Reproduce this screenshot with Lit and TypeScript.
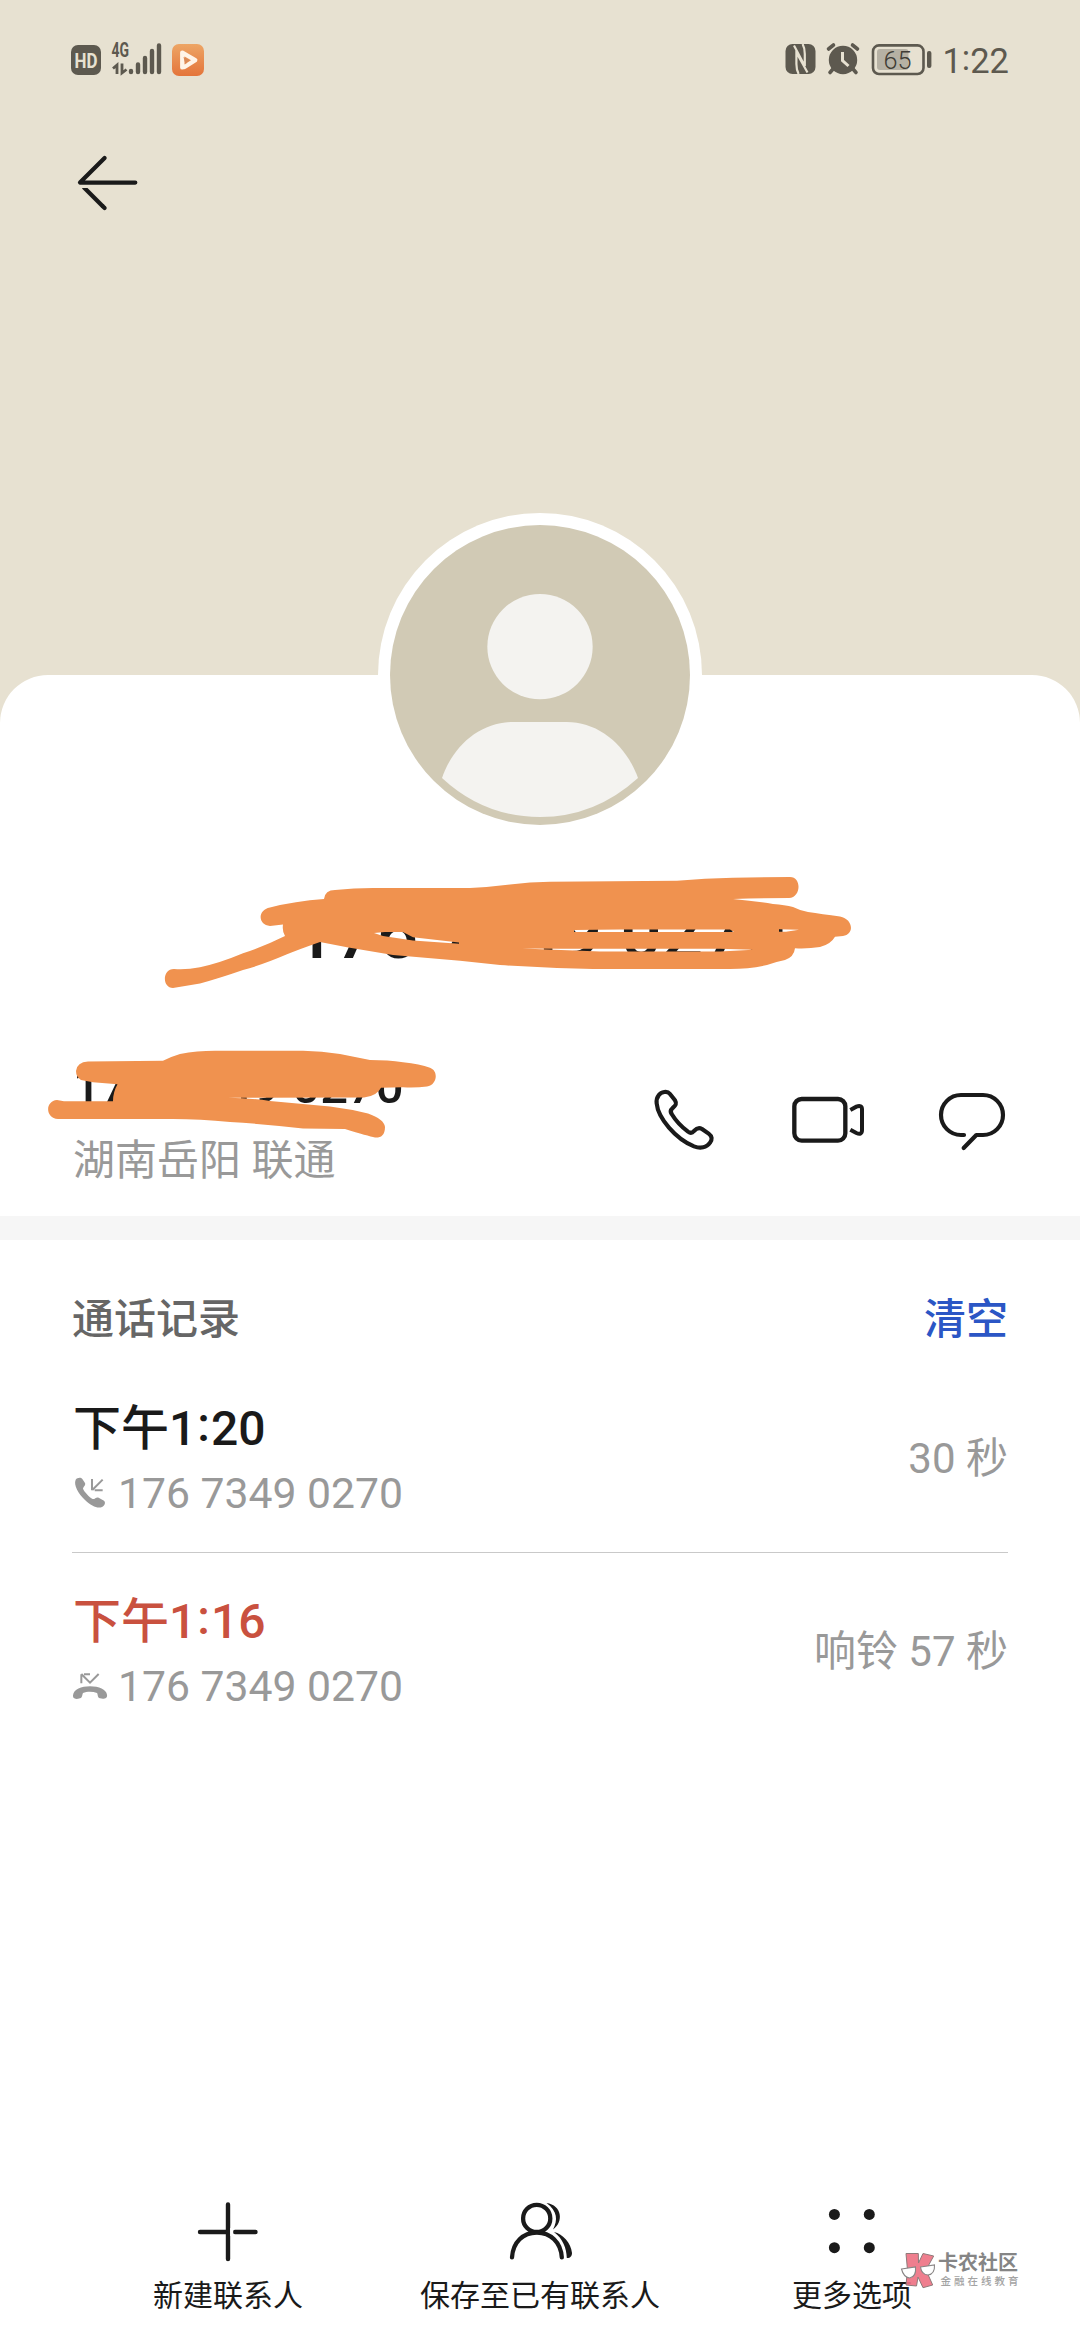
import { LitElement, html, css, svg } from "lit";
import { customElement, property } from "lit/decorators.js";

const INK = "#1a1a1a";
const STATUS = "#5d594f";

interface CallRecord {
  hour: string;
  minute: string;
  number: string;
  duration: string;
  missed: boolean;
}

const calls: CallRecord[] = [
  { hour: "下午1", minute: "20", number: "176 7349 0270", duration: "30 秒", missed: false },
  { hour: "下午1", minute: "16", number: "176 7349 0270", duration: "响铃 57 秒", missed: true },
];

@customElement("status-bar")
class StatusBar extends LitElement {
  static styles = css`
    :host {
      display: flex;
      justify-content: space-between;
      height: 120px;
      padding: 0 71px 0 70px;
      box-sizing: border-box;
    }
    .icons {
      display: block;
      height: 120px;
    }
    .right {
      display: flex;
    }
    .time {
      width: 72px;
      text-align: right;
      font-size: 34.5px;
      line-height: 122px;
      color: #5d594f;
      white-space: nowrap;
    }
    .colon {
      position: relative;
      top: -3px;
    }
    .label {
      font-family: Roboto, "Liberation Sans", sans-serif;
      font-weight: 700;
    }
    .level {
      font-family: Roboto, "Liberation Sans", sans-serif;
      font-weight: 300;
    }
  `;
  render() {
    return html`
      <svg class="icons" width="140" viewBox="70 0 140 120">
        <defs>
          <linearGradient id="play" x1="0" y1="0" x2="0" y2="1">
            <stop offset="0" stop-color="#eda565" />
            <stop offset="1" stop-color="#e4743a" />
          </linearGradient>
        </defs>
        <rect x="71" y="45" width="30" height="30" rx="7" fill=${STATUS} />
        <text class="label" x="74.6" y="68" font-size="20.5" textLength="23" lengthAdjust="spacingAndGlyphs" fill="#e7e1d1">HD</text>
        <text class="label" x="111.6" y="57" font-size="19.5" textLength="17.5" lengthAdjust="spacingAndGlyphs" fill=${STATUS}>4G</text>
        <path d="M113 68.5 L117 65 V74 M122 63.5 V73 L126.5 69.5" fill="none" stroke=${STATUS} stroke-width="2.8" />
        <g stroke=${STATUS} stroke-width="4.4" stroke-linecap="round">
          <path d="M131 71 V72 M138 64.5 V72 M145 58 V72 M152 51 V72 M159 45.5 V72" />
        </g>
        <rect x="172" y="44" width="32" height="32" rx="7" fill="url(#play)" />
        <path d="M182.3 67.4 V52.6 L195.2 60.2 L184.5 67" fill="none" stroke="#fff4e8" stroke-width="4.4" stroke-linejoin="round" stroke-linecap="round" />
        <path d="M183.5 57 L189.5 60.3 L186.500 62 L186 64.500 L184.500 61 Z" fill="#d98a58" />
      </svg>
      <div class="right">
        <svg class="icons" width="152" viewBox="785 0 152 120">
          <rect x="785.5" y="44" width="30" height="30" rx="7" fill=${STATUS} />
          <path d="M794 45.5 L804.8 66 V54 Q804.8 48 802.600 44 M807.500 72.500 L796.400 52.500 V64 Q796.400 70 798.600 74" fill="none" stroke="#e7e1d1" stroke-width="2.2" />
          <circle cx="843" cy="60" r="14.2" fill=${STATUS} />
          <path d="M828.5 49 L833.5 45 M852.5 45 L857.5 49 M833 69 L830 72.5 M853 69 L856 72.5" stroke=${STATUS} stroke-width="3.6" stroke-linecap="round" />
          <path d="M842.5 52 V60.5 L848.5 66" fill="none" stroke="#e7e1d1" stroke-width="3" />
          <rect x="877" y="49" width="31.5" height="21" rx="3" fill="#b6b1a4" />
          <rect x="873" y="45.4" width="50.5" height="28.6" rx="6" fill="none" stroke=${STATUS} stroke-width="2.6" />
          <rect x="927" y="51" width="4.4" height="17" rx="2" fill=${STATUS} />
          <text class="level" x="883.4" y="69" font-size="26.5" textLength="28" lengthAdjust="spacingAndGlyphs" fill="#403c35">65</text>
        </svg>
        <span class="time">1<span class="colon">:</span>22</span>
      </div>
    `;
  }
}

@customElement("contact-avatar")
class ContactAvatar extends LitElement {
  static styles = css`
    :host {
      display: block;
      width: 324px;
      height: 324px;
    }
    svg {
      display: block;
    }
  `;
  render() {
    return html`
      <svg width="324" height="324" viewBox="54 69 972 972">
        <circle cx="540" cy="555" r="486" fill="#fff" />
        <circle cx="540" cy="555" r="450" fill="#d1cab5" />
        <circle cx="540" cy="470" r="158" fill="#f4f3f0" />
        <path d="M246 864 C280 765 362 696 460 696 H620 C716 696 798 765 834 864 Q705 981 540 981 Q372 981 246 864 Z" fill="#f4f3f0" />
      </svg>
    `;
  }
}

@customElement("call-row")
class CallRow extends LitElement {
  @property({ attribute: false }) call!: CallRecord;
  static styles = css`
    :host {
      display: flex;
      justify-content: space-between;
      align-items: center;
      height: 192px;
      box-sizing: border-box;
    }
    .when {
      font-size: 48px;
      font-weight: 500;
      line-height: 64px;
      color: #1a1a1a;
      padding: 6px 0 0 1px;
    }
    .missed {
      color: #c9513f;
    }
    .colon {
      position: relative;
      top: -4px;
      padding: 0 1px;
    }
    .detail {
      display: flex;
      align-items: center;
      margin-top: 3px;
      gap: 10px;
      font-size: 42.7px;
      line-height: 58px;
      color: #999;
      font-weight: 400;
      white-space: nowrap;
    }
    .icon {
      display: block;
    }
    .duration {
      font-size: 42px;
      line-height: 58px;
      color: #999;
      padding-top: 6px;
    }
  `;
  private answeredIcon() {
    return html`<svg class="icon" width="36" height="36" viewBox="96 610 108 108">
      <path fill="#999" d="M107 624 C112 617 123 616 127 622 L135 634 C138 641 130 645 129 651 C134 662 148 676 158 682 C164 684 168 675 176 678 L192 687 C198 693 194 701 186 706 C173 712 154 703 135 685 C115 666 100 640 107 624 Z" />
      <path fill="none" stroke="#999" stroke-width="6" d="M188 624 L157 655 M156 622 V656 M164 656 H188" />
    </svg>`;
  }
  private missedIcon() {
    return html`<svg class="icon" width="36" height="36" viewBox="96 1192 108 108">
      <path fill="#999" d="M99 1274 C101 1256 124 1247 150 1247 C177 1247 199 1257 201 1272 C203 1284 191 1286 180 1283 C172 1281 174 1271 171 1267 C158 1262 141 1262 129 1267 C126 1272 128 1281 120 1283 C108 1286 98 1286 99 1274 Z" />
      <path fill="none" stroke="#999" stroke-width="6" d="M176 1210 L150 1236 L124 1210 M124 1238 V1211 M132 1211 H150" />
    </svg>`;
  }
  render() {
    const c = this.call;
    return html`
      <div>
        <div class="when ${c.missed ? "missed" : ""}">${c.hour}<span class="colon">:</span>${c.minute}</div>
        <div class="detail">${c.missed ? this.missedIcon() : this.answeredIcon()}<span>${c.number}</span></div>
      </div>
      <div class="duration">${c.duration}</div>
    `;
  }
}

@customElement("app-root")
class AppRoot extends LitElement {
  static styles = css`
    :host {
      display: block;
      width: 1080px;
      height: 2340px;
      position: relative;
      overflow: hidden;
      background: #fff;
      font-family: Roboto, "Noto Sans CJK SC", sans-serif;
      color: #1a1a1a;
    }
    .page {
      display: flex;
      flex-direction: column;
      height: 2340px;
    }
    .cover {
      height: 723px;
      background: #e7e1d1;
      flex: none;
    }
    .back {
      display: block;
      margin: 27px 0 0 72px;
    }
    .sheet {
      flex: 1;
      display: flex;
      flex-direction: column;
      margin-top: -48px;
      border-radius: 48px 48px 0 0;
      background: #fff;
    }
    .avatar {
      margin: -162px auto 0;
      flex: none;
    }
    .name {
      margin-top: 54px;
      height: 84px;
      line-height: 84px;
      text-align: center;
      font-size: 73px;
      font-weight: 500;
      white-space: nowrap;
    }
    .contact {
      display: flex;
      justify-content: space-between;
      align-items: center;
      height: 208px;
      margin-top: 33px;
      padding: 0 72px;
    }
    .identity {
      margin-top: 22px;
    }
    .number {
      font-size: 49px;
      font-weight: 500;
      line-height: 66px;
      white-space: nowrap;
      padding-left: 1px;
    }
    .place {
      font-size: 42px;
      line-height: 62px;
      color: #999;
      margin-top: 10px;
      padding-left: 1px;
    }
    .actions {
      display: flex;
      gap: 72px;
      margin-top: 16px;
    }
    .band {
      height: 24px;
      background: #f6f6f6;
      flex: none;
    }
    .log {
      flex: 1;
      padding: 0 72px;
    }
    .log-head {
      display: flex;
      justify-content: space-between;
      height: 120px;
      padding-top: 20px;
      box-sizing: border-box;
      font-size: 42px;
      line-height: 120px;
      font-weight: 500;
    }
    .log-title {
      color: #666;
    }
    .clear {
      color: #2b56c5;
    }
    .rule {
      height: 1px;
      background: #c9c9c9;
    }
    .toolbar {
      display: grid;
      grid-template-columns: repeat(3, 312px);
      justify-content: center;
      height: 144px;
      flex: none;
    }
    .tool {
      display: flex;
      flex-direction: column;
      align-items: center;
      font-size: 30px;
      line-height: 44px;
      font-weight: 400;
      white-space: nowrap;
      gap: 6px;
    }
    .scribble {
      position: absolute;
      left: 0;
      top: 0;
    }
    .watermark {
      position: absolute;
      left: 897px;
      top: 2246px;
    }
    .brand {
      font-family: "Noto Sans CJK SC", sans-serif;
      font-weight: 700;
    }
    .tagline {
      font-family: "Noto Sans CJK SC", sans-serif;
      font-weight: 500;
    }
  `;

  private scribble() {
    return svg`
      <path fill="#f0924f" fill-rule="evenodd" d="
        M324 899 Q325 890 335 890 Q354 888 373 888 L470 888 Q490 887 510 884.5 Q530 882 550 881.7 L677 880.7 Q705 878 733 877.7 L790 877
        C802 877 801 898 789 898 Q760 898 733 899 Q755 901 773 904 Q785 905 793 907 Q801 911 808 912 Q822 914 840 916.5
        C853 919 855 934 843 936 L835 936.7 Q831 944 820 947 Q808 949 795 948.3 Q794 957 785 960 Q775 962 767 965 Q750 969 730 969 L593 969
        Q546 968 500 965 L460 960.7 L393 955 L347 947.3 L320 942 Q300 949 287 954.3 Q262 965 243 970 Q220 978 200 983.5 Q185 986 173 988
        C162 988 162 969 174 969 Q186 970 200 967.3 Q220 963 243 953.3 Q265 946 285 936 Q282 931 283 924.5 L270 926 C258 925 257 910 270 907.5 Q295 901 324 899 Z
        M374 933 L385 932 H403 L413 937.3 L459 942.6 V943.8 L413 940.5 L383 936 Z
        M574 930 L620 929.6 L730 929.6 L734 932 H574 Z
        M779 929.3 L799 929.8 L786 931.8 H779 Z
        M522 948.4 L560 948.8 H720 L753 949.8 L720 951.5 H600 Z" />
      <path fill="#f0924f" d="
        M76 1071 Q77 1062 88 1061.5 L163 1060.7 Q170 1057 180 1054 Q198 1050.5 217 1050.7 H303 Q322 1051 340 1054 L370 1060 Q388 1060 403 1062.3 Q420 1064 430 1067.7
        C439 1071 437 1085 427 1086.5 Q416 1088 403 1087.3 L381 1087.7 Q377 1096 364 1097.5 L228 1097.7 Q250 1098 270 1101 L330 1106.5 Q350 1109 368 1113.5 Q384 1119 385 1127
        C385 1136 380 1138 375 1137.5 Q368 1136 345 1129 L303 1128.5 Q265 1124 230 1122 Q200 1119 173 1119 L58 1119 C45 1118 45 1101 57 1100 L64 1101.2 H113 Q113 1092 117.5 1084.3 L93 1082.3 L81 1080 Q76 1077 76 1071 Z" />
    `;
  }

  render() {
    return html`
      <div class="page">
        <div class="cover">
          <status-bar></status-bar>
          <svg class="back" width="72" height="72" viewBox="72 147 72 72">
            <g fill="none" stroke=${INK} stroke-width="4.2" stroke-linecap="round" stroke-linejoin="round">
              <path d="M104.6 158 L80 182.6 H135.3" />
              <path stroke-linecap="butt" d="M83.500 187 L103 206.400" />
              <path d="M103 206.400 L104.600 208" />
            </g>
            <rect x="80" y="185" width="14" height="3" fill="#e7e1d1" />
          </svg>
        </div>
        <div class="sheet">
          <contact-avatar class="avatar"></contact-avatar>
          <div class="name">176 7349 0270</div>
          <div class="contact">
            <div class="identity">
              <div class="number">176 7349 0270</div>
              <div class="place">湖南岳阳 联通</div>
            </div>
            <div class="actions">
              <svg width="72" height="72" viewBox="84 72 216 216">
                <path fill="none" stroke=${INK} stroke-width="12.5" stroke-linejoin="round" d="M116 106 C124 95 142 92 150 102 L165 121 C171 131 168 136 158 144 C151 150 151 156 155 162 C166 180 188 203 204 215 C211 220 217 219 222 213 C230 204 237 202 246 207 L266 221 C277 229 277 239 270 248 C260 263 241 266 222 259 C167 237 114 174 110 130 C109 120 111 112 116 106 Z" />
              </svg>
              <svg width="72" height="72" viewBox="516 72 216 216">
                <rect x="523" y="117" width="153" height="125" rx="22" fill="none" stroke=${INK} stroke-width="13" />
                <path fill="none" stroke=${INK} stroke-width="12" d="M691 150 L709 140 Q726 134 726 148 V210 Q726 226 709 219 L691 209" />
              </svg>
              <svg width="72" height="72" viewBox="948 72 216 216">
                <path fill="none" stroke=${INK} stroke-width="12.5" stroke-linecap="round" stroke-linejoin="round" d="M1032 225 H1023 A60 60 0 0 1 1023 105 H1089 A60 60 0 0 1 1089 225 H1069 L1031 264" />
              </svg>
            </div>
          </div>
          <div class="band"></div>
          <div class="log">
            <div class="log-head"><span class="log-title">通话记录</span><span class="clear">清空</span></div>
            <call-row .call=${calls[0]}></call-row>
            <div class="rule"></div>
            <call-row .call=${calls[1]}></call-row>
          </div>
          <div class="toolbar">
            <div class="tool">
              <svg width="72" height="72" viewBox="192 2196 72 72">
                <path fill="none" stroke=${INK} stroke-width="4.4" stroke-linecap="round" d="M228 2204.5 V2259 M200 2232 H226 M235 2232 H255.5" />
                <rect x="230.2" y="2228" width="3" height="8" fill="#fff" />
              </svg>
              <span>新建联系人</span>
            </div>
            <div class="tool">
              <svg width="72" height="72" viewBox="504 2196 72 72">
                <g fill="none" stroke=${INK} stroke-width="4.3" stroke-linecap="round">
                  <circle cx="536.7" cy="2218.4" r="13.6" />
                  <path d="M512 2257.4 C513 2242 523 2232.6 536.8 2232.6 C550.5 2232.6 560.8 2242 561.8 2257.4" />
                </g>
                <path fill=${INK} d="M546.5 2203 C562 2205 564 2222 553 2229.5 C558 2220 557.5 2211 546.5 2203 Z M554 2232 C563 2234 571 2243 572 2253 C572 2257 569 2258.5 566.8 2258 C566.5 2248 563 2239 554 2232 Z" />
              </svg>
              <span>保存至已有联系人</span>
            </div>
            <div class="tool">
              <svg width="72" height="72" viewBox="816 2196 72 72">
                <g fill=${INK}>
                  <circle cx="834.4" cy="2214.4" r="5.5" /><circle cx="869.3" cy="2214.4" r="5.5" />
                  <circle cx="834.4" cy="2247.7" r="5.5" /><circle cx="869.3" cy="2247.7" r="5.5" />
                </g>
              </svg>
              <span>更多选项</span>
            </div>
          </div>
        </div>
      </div>
      <svg class="scribble" width="1080" height="1160" viewBox="0 0 1080 1160">${this.scribble()}</svg>
      <svg class="watermark" width="128" height="48" viewBox="896 2246 128 48">
        <path fill="#ee7384" fill-opacity="0.92" stroke="#8f7a7a" stroke-width="1" d="M905 2253.5 L917.3 2253.5 L917.5 2263 L922 2253.5 L932.7 2256 L925 2270 L931.7 2285 L922 2287.7 L917 2277 L915.5 2286 L905 2285 L906.5 2270 Z" />
        <path fill="#fff" stroke="#8a8686" stroke-width="1.1" d="M900.5 2269 L914.5 2267 Q915.5 2277 908.5 2278 Q902.5 2277 900.5 2269 Z M919.5 2267 L933.5 2265 Q934 2274 927 2275 Q920.5 2274.500 919.5 2267 Z" />
        <text class="brand" x="937" y="2270" font-size="20" textLength="80" fill="#858585">卡农社区</text>
        <text class="tagline" x="939.5" y="2284.5" font-size="10.5" textLength="78" fill="#a3a3a3">金融在线教育</text>
      </svg>
    `;
  }
}
